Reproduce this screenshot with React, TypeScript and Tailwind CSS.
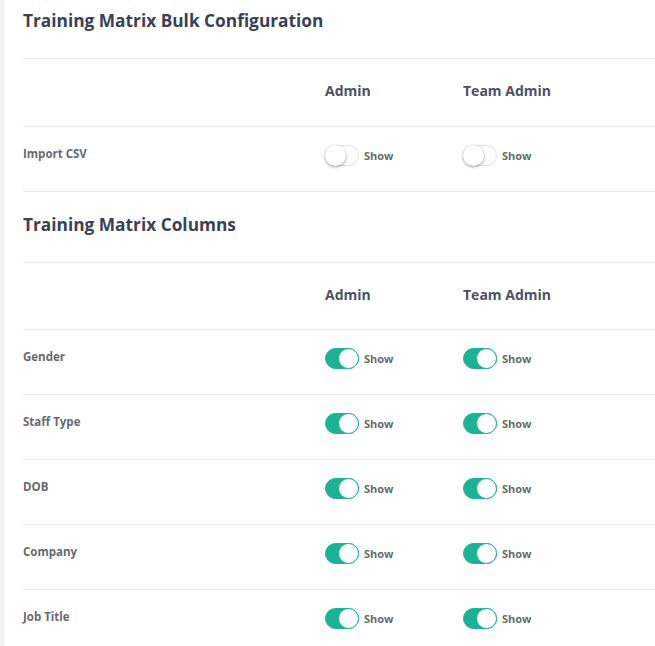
const font = { fontFamily: '"Open Sans", "Noto Sans", sans-serif' }

function Toggle({ on }: { on: boolean }) {
  return (
    <div className="flex items-center">
      <span
        className={
          on
            ? 'relative inline-block w-[34px] h-[21px] rounded-full bg-[#1ab394] border border-[#1ab394]'
            : 'relative inline-block w-[34px] h-[21px] rounded-full bg-white border border-[#dfdfdf]'
        }
      >
        <span
          className={
            on
              ? 'absolute top-[-1px] right-[-1px] w-[21px] h-[21px] rounded-full bg-white border border-[#1ab394]'
              : 'absolute top-[-1px] left-[-1px] w-[21px] h-[21px] rounded-full bg-white shadow-[0_1px_3px_rgba(0,0,0,0.4)]'
          }
        />
      </span>
      <span className="ml-[5px] text-[11px] font-bold text-[#676a6c] leading-[20px]">Show</span>
    </div>
  )
}

function HeaderRow({ h }: { h: string }) {
  return (
    <div className={'grid grid-cols-[302px_138px_1fr] pt-[22px] border-t border-[#e7eaec] ' + h}>
      <div />
      <div className="text-[14px] font-bold text-[#4a5261] leading-[20px]">Admin</div>
      <div className="text-[14px] font-bold text-[#4a5261] leading-[20px]">Team Admin</div>
    </div>
  )
}

function Row({ label, on }: { label: string; on: boolean }) {
  return (
    <div className="grid grid-cols-[302px_138px_1fr] h-[65px] pt-[17px] border-t border-[#e7eaec]">
      <div className="text-[11.5px] font-bold text-[#676a6c] leading-[20px]">{label}</div>
      <div className="pt-[1px]">
        <Toggle on={on} />
      </div>
      <div className="pt-[1px]">
        <Toggle on={on} />
      </div>
    </div>
  )
}

export default function App() {
  const columns = ['Gender', 'Staff Type', 'DOB', 'Company', 'Job Title']
  return (
    <div className="flex w-[655px] h-[646px] overflow-hidden bg-white" style={font}>
      <div className="w-[5px] shrink-0 bg-[#f3f3f4]" />
      <div className="flex-1 pl-[18px]">
        <div className="h-[58px] pt-[10px]">
          <h2 className="text-[17.3px] font-bold text-[#394253] leading-[22px]">Training Matrix Bulk Configuration</h2>
        </div>
        <HeaderRow h="h-[68px]" />
        <Row label="Import CSV" on={false} />
        <div className="h-[71px] pt-[22px] border-t border-[#e7eaec]">
          <h2 className="text-[17.3px] font-bold text-[#394253] leading-[22px]">Training Matrix Columns</h2>
        </div>
        <HeaderRow h="h-[67px]" />
        {columns.map((c) => (
          <Row key={c} label={c} on={true} />
        ))}
      </div>
    </div>
  )
}
